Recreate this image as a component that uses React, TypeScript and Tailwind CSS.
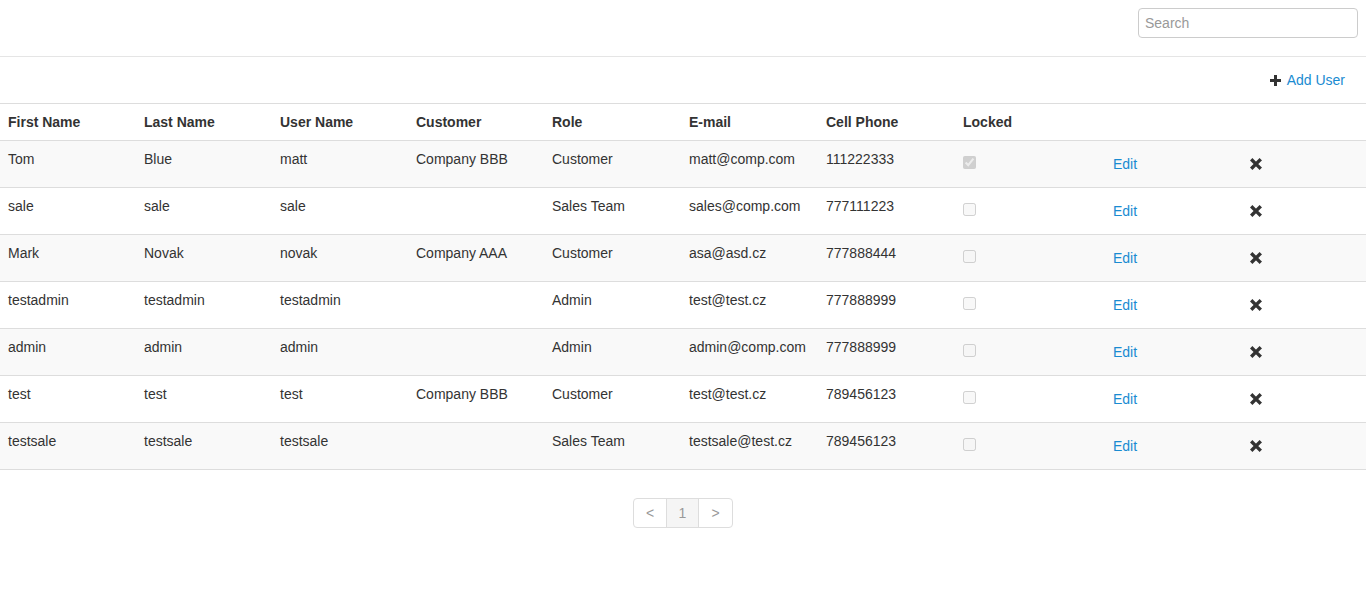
import React from 'react';

interface User {
  first: string;
  last: string;
  user: string;
  customer: string;
  role: string;
  email: string;
  phone: string;
  locked: boolean;
}

const USERS: User[] = [
  { first: 'Tom', last: 'Blue', user: 'matt', customer: 'Company BBB', role: 'Customer', email: 'matt@comp.com', phone: '111222333', locked: true },
  { first: 'sale', last: 'sale', user: 'sale', customer: '', role: 'Sales Team', email: 'sales@comp.com', phone: '777111223', locked: false },
  { first: 'Mark', last: 'Novak', user: 'novak', customer: 'Company AAA', role: 'Customer', email: 'asa@asd.cz', phone: '777888444', locked: false },
  { first: 'testadmin', last: 'testadmin', user: 'testadmin', customer: '', role: 'Admin', email: 'test@test.cz', phone: '777888999', locked: false },
  { first: 'admin', last: 'admin', user: 'admin', customer: '', role: 'Admin', email: 'admin@comp.com', phone: '777888999', locked: false },
  { first: 'test', last: 'test', user: 'test', customer: 'Company BBB', role: 'Customer', email: 'test@test.cz', phone: '789456123', locked: false },
  { first: 'testsale', last: 'testsale', user: 'testsale', customer: '', role: 'Sales Team', email: 'testsale@test.cz', phone: '789456123', locked: false },
];

const HEADERS = ['First Name', 'Last Name', 'User Name', 'Customer', 'Role', 'E-mail', 'Cell Phone', 'Locked', '', ''];

const PlusIcon = () => (
  <svg width="11" height="11" viewBox="0 0 11 11" className="inline-block">
    <rect x="4" y="0" width="3" height="11" fill="#333" />
    <rect x="0" y="4" width="11" height="3" fill="#333" />
  </svg>
);

const RemoveIcon = () => (
  <svg width="12" height="12" viewBox="0 0 12 12" className="block">
    <path d="M2.4 2.4 L9.6 9.6 M9.6 2.4 L2.4 9.6" stroke="#333" strokeWidth="3.4" strokeLinecap="square" />
  </svg>
);

export default function App() {
  return (
    <div className="min-h-screen bg-white text-[14px] leading-5 text-[#333] font-['Liberation_Sans',Arial,sans-serif]">
      {/* Top bar */}
      <div className="h-[57px] border-b border-[#e5e5e5] flex justify-end items-start pt-2 pr-2">
        <input
          type="text"
          placeholder="Search"
          className="w-[220px] h-[30px] px-[6px] border border-[#ccc] rounded-[4px] text-[14px] placeholder:text-[#999] outline-none"
        />
      </div>

      {/* Actions */}
      <div className="h-[47px] border-b border-[#ddd] flex justify-end items-center pr-[21px]">
        <a href="#" className="flex items-center gap-[6px] text-[#1a8bd1]">
          <PlusIcon />
          <span>Add User</span>
        </a>
      </div>

      {/* Table */}
      <table className="w-full table-fixed border-collapse">
        <colgroup>
          <col className="w-[136px]" />
          <col className="w-[136px]" />
          <col className="w-[136px]" />
          <col className="w-[136px]" />
          <col className="w-[137px]" />
          <col className="w-[137px]" />
          <col className="w-[137px]" />
          <col className="w-[138px]" />
          <col className="w-[137px]" />
          <col className="w-[136px]" />
        </colgroup>
        <thead>
          <tr className="h-[36px]">
            {HEADERS.map((h, i) => (
              <th key={i} className="px-2 py-2 text-left font-bold align-bottom">
                {h}
              </th>
            ))}
          </tr>
        </thead>
        <tbody>
          {USERS.map((u, idx) => (
            <tr key={idx} className={`border-t border-[#ddd] ${idx % 2 === 0 ? 'bg-[#f9f9f9]' : 'bg-white'}`}>
              <td className="px-2 pt-2 pb-2 h-[47px] align-top">{u.first}</td>
              <td className="px-2 py-2 align-top">{u.last}</td>
              <td className="px-2 py-2 align-top">{u.user}</td>
              <td className="px-2 py-2 align-top">{u.customer}</td>
              <td className="px-2 py-2 align-top">{u.role}</td>
              <td className="px-2 py-2 align-top">{u.email}</td>
              <td className="px-2 py-2 align-top">{u.phone}</td>
              <td className="px-2 py-2 align-top">
                <input type="checkbox" disabled checked={u.locked} readOnly className="m-0 mt-[7px] block w-[13px] h-[13px]" />
              </td>
              <td className="px-2 py-2 align-top">
                <a href="#" className="inline-block px-3 py-[5px] text-[#1a8bd1]">Edit</a>
              </td>
              <td className="px-2 py-2 align-top">
                <span className="inline-block px-3 pt-[9px]">
                  <RemoveIcon />
                </span>
              </td>
            </tr>
          ))}
          <tr className="border-t border-[#ddd]"><td colSpan={10} className="p-0"></td></tr>
        </tbody>
      </table>

      {/* Pagination */}
      <div className="flex justify-center mt-[28px]">
        <div className="flex border border-[#ddd] rounded-[4px] overflow-hidden text-[#999]">
          <span className="w-[32px] h-[28px] flex items-center justify-center">&lt;</span>
          <span className="w-[33px] h-[28px] flex items-center justify-center border-l border-r border-[#ddd] bg-[#f5f5f5]">1</span>
          <span className="w-[33px] h-[28px] flex items-center justify-center">&gt;</span>
        </div>
      </div>
    </div>
  );
}
